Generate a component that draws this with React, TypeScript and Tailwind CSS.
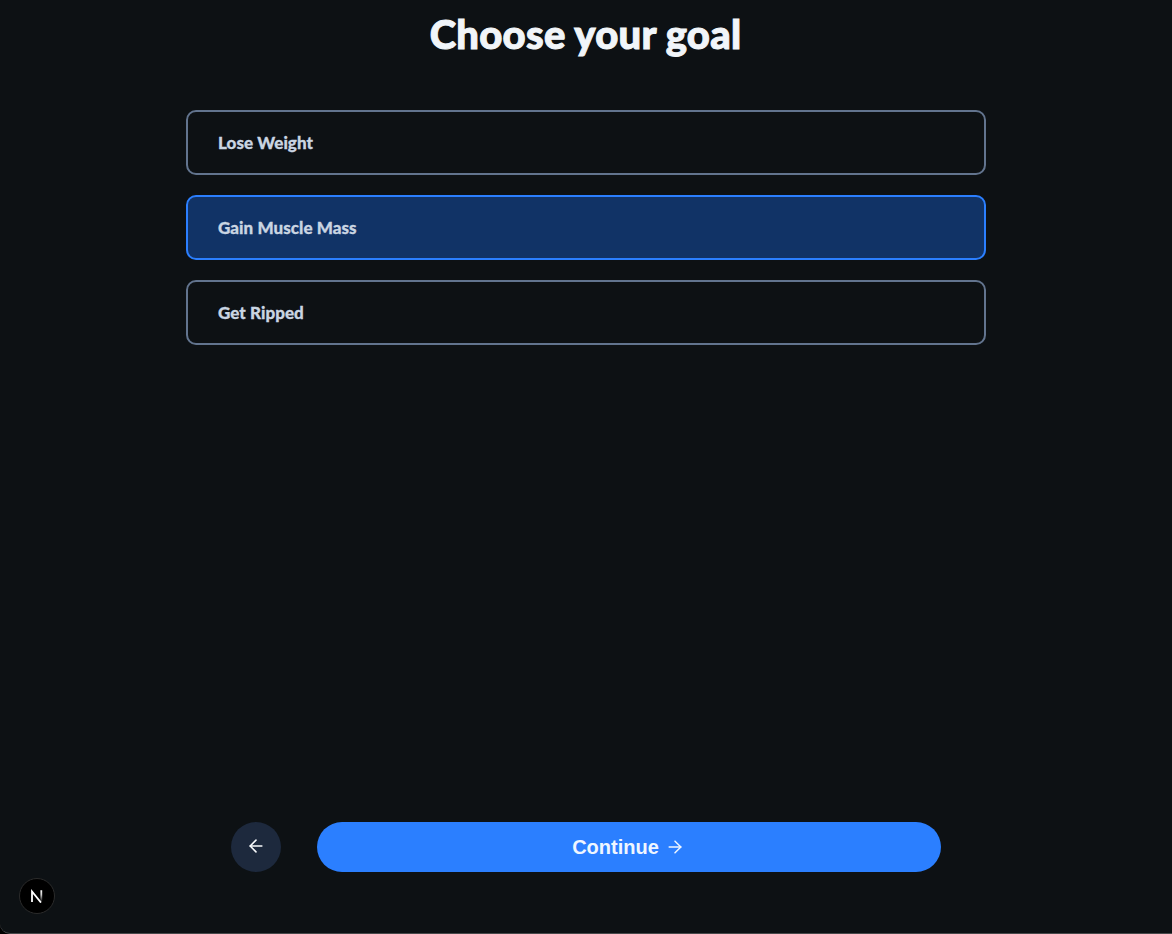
import { ArrowLeft, ArrowRight } from "lucide-react";

const goals = ["Lose Weight", "Gain Muscle Mass", "Get Ripped"];
const selected = "Gain Muscle Mass";

export default function App() {
  return (
    <div className="h-[934px] w-full bg-black">
      <main className="relative flex h-[934px] w-full flex-col items-center overflow-hidden rounded-bl-[10px] border-b border-[#47494b] bg-[#0d1114] font-['Lato',sans-serif]">
        <h1 className="mt-[4px] pr-px text-[40px] leading-[60px] font-black tracking-[0.25px] text-slate-100 [-webkit-text-stroke:1px_#f1f5f9]">
          Choose your goal
        </h1>
        <div className="mt-[46px] flex w-[800px] flex-col gap-5">
          {goals.map((goal) => (
            <button
              key={goal}
              className={
                goal === selected
                  ? "flex h-[65px] items-center rounded-[10px] border-2 border-[#2b7fff] bg-[#113366] px-[30px] pt-px text-[17px] font-black tracking-[0.06px] text-slate-300 [-webkit-text-stroke:0.3px_#cad5e2]"
                  : "flex h-[65px] items-center rounded-[10px] border-2 border-slate-500 px-[30px] pt-px text-[17px] font-black tracking-[0.06px] text-slate-300 [-webkit-text-stroke:0.3px_#cad5e2]"
              }
            >
              {goal}
            </button>
          ))}
        </div>
        <div className="mt-auto mb-[61px] flex w-[710px] gap-9">
          <button className="flex size-[50px] items-center justify-center rounded-full bg-slate-800 pb-0.5 text-slate-50">
            <ArrowLeft size={20} strokeWidth={1.9} />
          </button>
          <button className="flex h-[50px] flex-1 items-center justify-center gap-[6px] rounded-full bg-[#2b7fff] pr-px font-['Liberation_Sans',sans-serif] text-[20px] font-bold text-blue-50">
            Continue
            <ArrowRight size={20} strokeWidth={1.8} />
          </button>
        </div>
        <div className="absolute bottom-[19px] left-[19px] flex size-9 items-center justify-center rounded-full border border-[#2b2b2b] bg-black">
          <svg width="14" height="14" viewBox="0 0 14 14" fill="none" stroke="white" strokeWidth="1.8">
            <defs>
              <linearGradient id="stem" x1="0" y1="1" x2="0" y2="13" gradientUnits="userSpaceOnUse">
                <stop stopColor="white" />
                <stop offset="0.4" stopColor="white" stopOpacity="0.8" />
                <stop offset="1" stopColor="white" stopOpacity="0" />
              </linearGradient>
            </defs>
            <path d="M2 13V2.5L11 13.6" />
            <path d="M10.4 1.3h1.8v11h-1.8z" fill="url(#stem)" stroke="none" />
          </svg>
        </div>
      </main>
    </div>
  );
}
